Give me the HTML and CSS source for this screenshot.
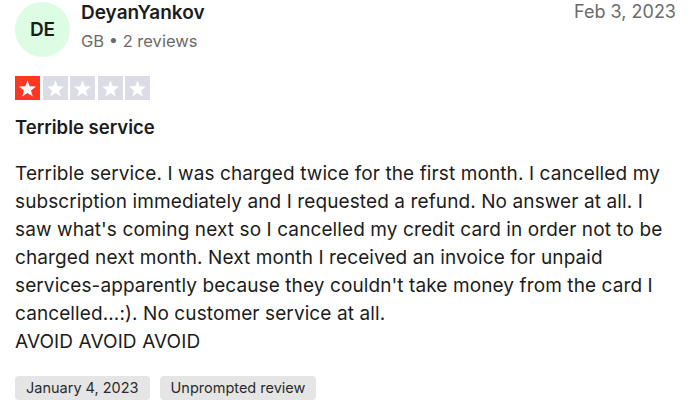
FILE: index.html
```html
<!DOCTYPE html>
<html lang="en">

<head>
  <meta charset="UTF-8">
  <meta name="viewport" content="width=device-width, initial-scale=1.0">
  <title>Review</title>
  <link rel="stylesheet" href="styles.css">
</head>

<body>
  <article class="review">
    <header class="review-header">
      <div class="avatar">DE</div>
      <div class="consumer">
        <div class="consumer-name">DeyanYankov</div>
        <div class="consumer-meta">GB &bull; 2 reviews</div>
      </div>
      <time class="review-date">Feb 3, 2023</time>
    </header>

    <!-- rating: 1 of 5 -->
    <div class="stars">
      <span class="star star-on"><svg viewBox="0 0 24 24"><path d="M12 4.2l2.1 5.6 6 .3-4.7 3.7 1.6 5.8L12 16.3l-5 3.3 1.6-5.8-4.7-3.7 6-.3z"/></svg></span>
      <span class="star"><svg viewBox="0 0 24 24"><path d="M12 4.2l2.1 5.6 6 .3-4.7 3.7 1.6 5.8L12 16.3l-5 3.3 1.6-5.8-4.7-3.7 6-.3z"/></svg></span>
      <span class="star"><svg viewBox="0 0 24 24"><path d="M12 4.2l2.1 5.6 6 .3-4.7 3.7 1.6 5.8L12 16.3l-5 3.3 1.6-5.8-4.7-3.7 6-.3z"/></svg></span>
      <span class="star"><svg viewBox="0 0 24 24"><path d="M12 4.2l2.1 5.6 6 .3-4.7 3.7 1.6 5.8L12 16.3l-5 3.3 1.6-5.8-4.7-3.7 6-.3z"/></svg></span>
      <span class="star"><svg viewBox="0 0 24 24"><path d="M12 4.2l2.1 5.6 6 .3-4.7 3.7 1.6 5.8L12 16.3l-5 3.3 1.6-5.8-4.7-3.7 6-.3z"/></svg></span>
    </div>

    <h2 class="review-title">Terrible service</h2>

    <p class="review-text">Terrible service. I was charged twice for the first month. I cancelled my subscription immediately and I requested a refund. No answer at all. I saw what's coming next so I cancelled my credit card in order not to be charged next month. Next month I received an invoice for unpaid services-apparently because they couldn't take money from the card I cancelled...:). No customer service at all.<br>AVOID AVOID AVOID</p>

    <div class="tags">
      <span class="tag">January 4, 2023</span>
      <span class="tag">Unprompted review</span>
    </div>
  </article>
</body>

</html>
```

FILE: styles.css
```css
body {
  margin: 0;
  background: #ffffff;
  font-family: Inter, "Liberation Sans", Arial, sans-serif;
  color: #1c1c1c;
}

.review {
  padding: 0 18px 0 15px;
}

.review-header {
  display: flex;
  align-items: flex-start;
}

.avatar {
  width: 55px;
  height: 55px;
  margin-top: 2px;
  border-radius: 50%;
  background: #dcfce3;
  color: #1c1c1c;
  display: flex;
  align-items: center;
  justify-content: center;
  font-size: 19px;
  font-weight: 600;
  flex-shrink: 0;
}

.consumer {
  margin-left: 11px;
}

.consumer-name {
  font-size: 19px;
  font-weight: 600;
  line-height: 26px;
}

.consumer-meta {
  font-size: 16.5px;
  color: #6b6b6b;
  line-height: 24px;
  margin-top: 3px;
}

.review-date {
  margin-left: auto;
  font-size: 18px;
  color: #6b6b6b;
  line-height: 24px;
}

.stars {
  display: flex;
  gap: 2.5px;
  margin-top: 19px;
}

.star {
  width: 25px;
  height: 24px;
  background: #dcdce6;
  display: flex;
  align-items: center;
  justify-content: center;
}

.star svg {
  width: 25px;
  height: 25px;
  margin-top: 1px;
  fill: #ffffff;
}

.star-on {
  background: #ff3722;
}

.review-title {
  margin: 13px 0 0;
  font-size: 18.5px;
  font-weight: 600;
  line-height: 28px;
}

.review-text {
  margin: 19px 0 0;
  font-size: 19px;
  letter-spacing: 0.1px;
  line-height: 28px;
}

.tags {
  display: flex;
  gap: 10px;
  margin-top: 20px;
}

.tag {
  background: #e5e5e5;
  border-radius: 4px;
  padding: 0 11px;
  font-size: 14.5px;
  line-height: 24px;
  color: #2b2b2b;
}
```
